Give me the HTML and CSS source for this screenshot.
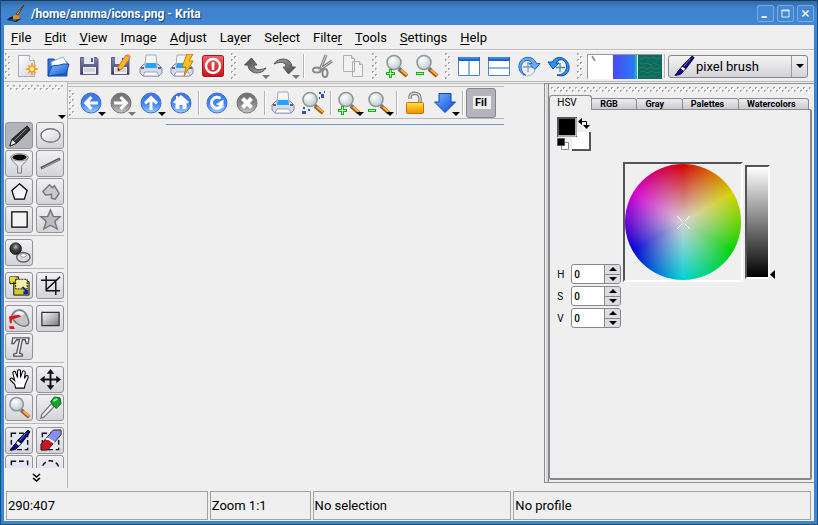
FILE: index.html
```html
<!DOCTYPE html>
<html lang="en">
<head>
<meta charset="utf-8">
<title>/home/annma/icons.png - Krita</title>
<link rel="stylesheet" href="styles.css">
</head>
<body>
<svg class="defs" aria-hidden="true">
  <defs>
    <linearGradient id="gBlue" x1="0" y1="0" x2="0" y2="1"><stop offset="0" stop-color="#3d74ea"/><stop offset=".55" stop-color="#3f83f8"/><stop offset="1" stop-color="#9fd0ff"/></linearGradient>
    <linearGradient id="gGray" x1="0" y1="0" x2="0" y2="1"><stop offset="0" stop-color="#6c6c6c"/><stop offset=".6" stop-color="#8c8c8c"/><stop offset="1" stop-color="#c8c8c8"/></linearGradient>
    <linearGradient id="gPaper" x1="0" y1="0" x2="1" y2="1"><stop offset="0" stop-color="#fff"/><stop offset="1" stop-color="#d0d3dc"/></linearGradient>
    <linearGradient id="gDisk" x1="0" y1="0" x2="0" y2="1"><stop offset="0" stop-color="#8388ae"/><stop offset="1" stop-color="#383c63"/></linearGradient>
    <linearGradient id="gFolder" x1="0" y1="0" x2="1" y2="1"><stop offset="0" stop-color="#8cc4ff"/><stop offset="1" stop-color="#0b50d0"/></linearGradient>
    <linearGradient id="gGold" x1="0" y1="0" x2="0" y2="1"><stop offset="0" stop-color="#ffe33c"/><stop offset="1" stop-color="#f58a00"/></linearGradient>
    <linearGradient id="gDark" x1="0" y1="0" x2="1" y2="1"><stop offset="0" stop-color="#444"/><stop offset="1" stop-color="#aaa"/></linearGradient>
    <linearGradient id="gRed" x1="0" y1="0" x2="0" y2="1"><stop offset="0" stop-color="#e66"/><stop offset="1" stop-color="#c8141b"/></linearGradient>
    <linearGradient id="gArrow" x1="0" y1="0" x2="1" y2="1"><stop offset="0" stop-color="#77b7ff"/><stop offset="1" stop-color="#0c45dd"/></linearGradient>
    <linearGradient id="gFade" x1="0" y1="0" x2="1" y2="1"><stop offset="0" stop-color="#fff"/><stop offset="1" stop-color="#777"/></linearGradient>
    <radialGradient id="gLens" cx=".38" cy=".32" r=".7"><stop offset="0" stop-color="#fff"/><stop offset="1" stop-color="#bccbd0"/></radialGradient>
    <radialGradient id="gBall" cx=".5" cy=".35" r=".6"><stop offset="0" stop-color="#bbb"/><stop offset=".5" stop-color="#444"/><stop offset="1" stop-color="#222"/></radialGradient>
    <pattern id="grip" width="6" height="6" patternUnits="userSpaceOnUse"><path d="M0 0h2v1h-1v1h-1zM3 3h2v1h-1v1h-1z" fill="#a4a4a4"/><path d="M2 1v1h-1v1h2v-2zM5 4v1h-1v1h2v-2z" fill="#fff"/></pattern>
  </defs>
  <symbol id="lens" viewBox="0 0 24 24"><path d="M14 15l8 7" stroke="#9a5a18" stroke-width="4"/><path d="M15 15l7 6" stroke="#ffae3d" stroke-width="2.2"/><path d="M13 13l3 3" stroke="#777" stroke-width="3"/><circle cx="9" cy="8.500" r="7" fill="url(#gLens)" stroke="#909798" stroke-width="1.600"/></symbol>
  <symbol id="new" viewBox="0 0 24 24"><path d="M3.500 1.500h11l5 5v16h-16z" fill="url(#gPaper)" stroke="#a5a9b4"/><path d="M14.500 1.500v5h5" fill="#fff" stroke="#b4b7be"/><path d="M17 9l1 4 3-2-2 3 4 1-4 1 2 3-3-2-1 4-1-4-3 2 2-3-4-1 4-1-2-3 3 2z" fill="#f7a11e" stroke="#f7a11e"/><circle cx="17" cy="15" r="2" fill="#fff3b0"/></symbol>
  <symbol id="open" viewBox="0 0 24 24"><path d="M2 22V5h6l2 3h11v14z" fill="#2b76e0" stroke="#0d48b0"/><path d="M5 8l12-5 5 8-15 6z" fill="#fff" stroke="#91a9d0"/><path d="M2 22l4-10 8-1 3-1h6l-3 10z" fill="url(#gFolder)" stroke="#0b45b4"/></symbol>
  <symbol id="save" viewBox="0 0 24 24"><path d="M3.500 3.500h16l1.500 2v15h-17.500z" fill="url(#gDisk)" stroke="#5b5f86"/><path d="M7 3h10v7H7z" fill="#e6e9f5"/><path d="M14 4h2v4h-2z" fill="#555a80"/><path d="M6 13h13v7H6z" fill="#eeeef2"/><path d="M7 15h11M7 17h11" stroke="#b7bac8"/></symbol>
  <symbol id="pencilo" viewBox="0 0 24 24"><path d="M18 1l4 3-8 11-4 2 0-4z" fill="#ffb62e" stroke="#c17a13"/><path d="M18 1l4 3 1-2-3-2z" fill="#ef8a86"/><path d="M10 17l0-3 2 2z" fill="#222"/></symbol>
  <symbol id="print" viewBox="0 0 24 24"><path d="M1 14l4-4h14l4 4v5l-3 3H4l-3-3z" fill="#d7dbe9" stroke="#858ba6"/><path d="M7 1h10l1 11H6z" fill="#f4f6fb" stroke="#a7abb8"/><path d="M7 9h10l1 5H6z" fill="#20a4ff"/><path d="M6 18h12l2 4H4z" fill="#fff" stroke="#9ba1b8"/><path d="M2 14h3M19 14h3" stroke="#5f6684" stroke-width="2"/></symbol>
  <symbol id="bolt" viewBox="0 0 24 24"><path d="M17 0h6l-4 7h4L14 22l2-9h-4z" fill="#ffc21c" stroke="#c8760a"/></symbol>
  <symbol id="power" viewBox="0 0 24 24"><rect x="1.500" y="1.500" width="21" height="21" rx="2" fill="url(#gRed)" stroke="#b01218"/><circle cx="12" cy="12" r="7" fill="none" stroke="#fff" stroke-width="2.400"/><path d="M12 8v8" stroke="#fff" stroke-width="2.600"/></symbol>
  <symbol id="undo" viewBox="0 0 24 24"><path d="M1.500 11l7-7 5.500 7h-3c0 5 5 6 12 3-4 7-17 7-18-3z" fill="url(#gDark)" stroke="#555"/></symbol>
  <symbol id="cut" viewBox="0 0 24 24"><path d="M15 1l-6 15M21 7L8 16" stroke="#777" stroke-width="3"/><path d="M15 1l-6 15M21 7L8 16" stroke="#ddd"/><ellipse cx="6" cy="16" rx="4" ry="2.500" fill="none" stroke="#888" stroke-width="2"/><ellipse cx="14" cy="19" rx="2.500" ry="4" fill="none" stroke="#888" stroke-width="2"/></symbol>
  <symbol id="copy" viewBox="0 0 24 24"><path d="M2.500 1.500h8l3 3v13h-11zM11.500 7.500h7l3 3v12h-10z" fill="#f1f1f1" stroke="#b0b0b0"/><path d="M18.500 7.500v3h3M10.500 1.500v3h3" fill="#ddd" stroke="#b0b0b0"/></symbol>
  <symbol id="plus" viewBox="0 0 24 24"><path d="M4 15h3v3h3v3H7v3H4v-3H1v-3h3z" fill="#14b414"/><path d="M5.500 16v7M2 19.500h7" stroke="#b9ffb0"/></symbol>
  <symbol id="minus" viewBox="0 0 24 24"><path d="M1 18h8v3H1z" fill="#14b414"/><path d="M2 19.500h6" stroke="#b9ffb0"/></symbol>
  <symbol id="splitv" viewBox="0 0 24 24"><path d="M1.500 3.500h21v18h-21z" fill="#fff" stroke="#4a86d8"/><path d="M1 3h22v4H1z" fill="#1e63d2"/><path d="M2 4h20" stroke="#6da5f5"/><path d="M12 7v14" stroke="#8fb3e6" stroke-width="2"/></symbol>
  <symbol id="splith" viewBox="0 0 24 24"><path d="M1.500 3.500h21v18h-21z" fill="#fff" stroke="#4a86d8"/><path d="M1 3h22v4H1z" fill="#1e63d2"/><path d="M2 4h20" stroke="#6da5f5"/><path d="M2 14h20" stroke="#8fb3e6" stroke-width="2"/></symbol>
  <symbol id="rot" viewBox="0 0 24 24"><path d="M18 15a8 8 0 0 1-8 7" fill="none" stroke="#99b7dc"/><path d="M11 8v10M6 13h10" stroke="#7f9cbd" stroke-width="1.300"/><path d="M9 21.500C0 20-1 6 9 3.500c5-1 9 2 10.500 6H23l-5 6-6-6h3c-1-2-3-3.500-6-3C2 9 3 18 9 21.500z" fill="#6aaaf5" stroke="#2467c8"/></symbol>
  <symbol id="rot2" viewBox="0 0 24 24"><path d="M13 9v9M9 13.500h9" stroke="#53869b" stroke-width="1.300"/><path d="M10 21c7 3 13-2 12-9S11-1 5 8H1l5 7 6-6H9c4-6 10-3 10.500 3S15 21 10 21z" fill="#2793ee" stroke="#0b4fac"/></symbol>
  <symbol id="ball" viewBox="0 0 24 24"><circle cx="12" cy="12" r="10" fill="url(#gBlue)" stroke="#456fca"/></symbol>
  <symbol id="ballg" viewBox="0 0 24 24"><circle cx="12" cy="12" r="10" fill="url(#gGray)" stroke="#777"/></symbol>
  <symbol id="larr" viewBox="0 0 24 24"><path d="M19 10.500h-8.500l3-3.500-2.200-2L4.500 12l6.800 7 2.200-2-3-3.500H19z" fill="#fff"/></symbol>
  <symbol id="home" viewBox="0 0 24 24"><path d="M12 4l8 7-1.500 1.500L17.500 12v6h-4v-4h-3v4h-4v-6l-1 .5L4 11l3-2.700V5h2v1.500z" fill="#fff"/></symbol>
  <symbol id="reload" viewBox="0 0 24 24"><path d="M15.500 7.500A5.500 5.500 0 1 0 16.500 15" fill="none" stroke="#fff" stroke-width="3"/><path d="M18.500 8.500v8.500l-7.500-4z" fill="#fff"/></symbol>
  <symbol id="cross" viewBox="0 0 24 24"><path d="M7.500 7.500l9 9M16.500 7.500l-9 9" stroke="#fff" stroke-width="4"/></symbol>
  <symbol id="bits" viewBox="0 0 24 24"><path d="M20 3h3v4h-3zM18 1h2v2h-2zM23 0h1v2h-1zM18 6h1v2h-1zM1 20h4v3H1zM7 18h2v2H7zM2 16h2v2H2z" fill="#3456a8"/></symbol>
  <symbol id="lock" viewBox="0 0 24 24"><path d="M7 8V6c0-5 10-5 10 1v4" fill="none" stroke="#777" stroke-width="3.500"/><path d="M7 8V6c0-5 10-5 10 1v4" fill="none" stroke="#ddd" stroke-width="1.400"/><rect x="3.500" y="11.500" width="17" height="11" rx="1" fill="url(#gGold)" stroke="#bb7409"/></symbol>
  <symbol id="down" viewBox="0 0 24 24"><path d="M6 2.500h12V11h4.500L12 21.500 1.500 11H6z" fill="url(#gArrow)" stroke="#1245b5"/></symbol>
  <symbol id="krita" viewBox="0 0 20 20"><path d="M1 16c4-5 9-4 14-1l-5 3z" fill="#14181c"/><path d="M7 12l5-2 2 5-7 1z" fill="#d98b29"/><path d="M18 1l-6 10-2-1z" fill="#e7a034" stroke="#63340a"/><path d="M2 16l6-1 3 2z" fill="#0a7da3"/></symbol>
  <symbol id="brush" viewBox="0 0 24 24"><path d="M21 1l2 2-9 12-4-3z" fill="#10108c" stroke="#000"/><path d="M19 4l-7 8" stroke="#6f78ff"/><path d="M10 12l4 3-3 3-3-3z" fill="#fff" stroke="#000"/><path d="M8 15l3 3c-2 4-6 4-9 4 3-2 3-5 6-7z" fill="#0808b0" stroke="#000"/></symbol>
  <symbol id="pen" viewBox="0 0 24 24"><path d="M20 2l3 4L9 20l-7 3 2-7z" fill="#333" stroke="#111"/><path d="M19 5L7 17" stroke="#999"/><path d="M4 16l5 4-7 3z" fill="#e8e8e8" stroke="#222"/></symbol>
  <symbol id="oval" viewBox="0 0 24 24"><ellipse cx="12" cy="12" rx="10" ry="7" fill="url(#gPaper)" stroke="#777" stroke-width="1.500"/></symbol>
  <symbol id="funnel" viewBox="0 0 24 24"><path d="M3 5c1 6 6 7 7 10v7h4v-7c1-3 6-4 7-10z" fill="url(#gPaper)" stroke="#777"/><ellipse cx="12" cy="5.500" rx="9" ry="3.800" fill="#ddd" stroke="#888"/><ellipse cx="12" cy="5.500" rx="7.500" ry="3" fill="#080808"/></symbol>
  <symbol id="line" viewBox="0 0 24 24"><path d="M2 17L22 7" stroke="#555" stroke-width="3"/><path d="M3 17L21 8" stroke="#aaa"/></symbol>
  <symbol id="penta" viewBox="0 0 24 24"><path d="M12 4l8 7-3 9H7l-3-9z" fill="#f6f6f6" stroke="#000" stroke-width="1.300"/></symbol>
  <symbol id="poly" viewBox="0 0 24 24"><path d="M4 12l7-7 3 3 2-2 5 8-4 6-4-1v-4l-6 1z" fill="#c9c9cc" stroke="#777" stroke-width="1.500"/></symbol>
  <symbol id="square" viewBox="0 0 24 24"><path d="M4 4h16v16H4z" fill="#f4f4f4" stroke="#000" stroke-width="1.300"/></symbol>
  <symbol id="star" viewBox="0 0 24 24"><path d="M12 2l3 7h7l-5.500 5 2.500 8-7-4-7 4 2.500-8L2 9h7z" fill="#bcbcbf" stroke="#777" stroke-width="1.500"/></symbol>
  <symbol id="dup" viewBox="0 0 24 24"><ellipse cx="16" cy="17" rx="7" ry="5" fill="#ddd" stroke="#666" stroke-width="1.500"/><ellipse cx="16" cy="15" rx="3" ry="2" fill="#fff" stroke="#888"/><circle cx="8" cy="8" r="6" fill="url(#gBall)" stroke="#222"/></symbol>
  <symbol id="trans" viewBox="0 0 24 24"><path d="M2 3h9v7H2zM6 8h16v14H6z" fill="#d0ca2c" stroke="#111"/><path d="M2 3h6v5H2z" fill="#e2dd3c"/><path d="M8 5.500h12v10H8z" fill="#f2f0a4" stroke="#111" stroke-dasharray="2 1"/><path d="M14 14l4 4h-2v3h5v-5l-1 1-4-4z" fill="#1522a5"/></symbol>
  <symbol id="crop" viewBox="0 0 24 24"><path d="M7.500 2v15.500H22M2 6.500h15.500V22M7 17L22 3" fill="none" stroke="#111" stroke-width="1.500"/></symbol>
  <symbol id="fill" viewBox="0 0 24 24"><path d="M4 9c3-8 13-8 16 1 3 7 2 10-3 10-6 0-12-5-13-11z" fill="#c4c4c4" stroke="#777" stroke-width="1.500"/><path d="M7 7c3-4 8-3 10 0-3 3-7 3-10 0z" fill="#f5f5f5"/><path d="M1 10l10-2 3 2-10 3v4H2zM1 20h5l1 3H2z" fill="#e0151c"/></symbol>
  <symbol id="grad" viewBox="0 0 24 24"><path d="M3 5.500h18v14H3z" fill="url(#gFade)" stroke="#333" stroke-width="1.300"/></symbol>
  <symbol id="text" viewBox="0 0 24 24"><path d="M5 3h17l-1 6h-2l-1-4h-3l-3 14 3 1v2H6v-2l3-1 3-14H9L6 9H4z" fill="#f8f8f8" stroke="#555" stroke-width="1.400"/></symbol>
  <symbol id="hand" viewBox="0 0 24 24"><path d="M8 21l-1-4-5-5c1-3 3-1 5 1L5 5c1-3 3-1 3 0l2 5V3c1-2 3-1 3 0v7l2-6c1-2 3-1 3 1l-1 6 2-3c2-1 2 1 2 2l-3 7-1 4z" fill="#fff" stroke="#000" stroke-width="1.100"/></symbol>
  <symbol id="move" viewBox="0 0 24 24"><path d="M12 1l4 5h-3v5h5V8l5 4-5 4v-3h-5v5h3l-4 5-4-5h3v-5H6v3l-5-4 5-4v3h5V6H8z" fill="#111"/></symbol>
  <symbol id="drop" viewBox="0 0 24 24"><path d="M13 8l3 3L5 22l-3 1 1-4z" fill="#eee" stroke="#777" stroke-width="1.300"/><path d="M12 6l4-5 6 1 1 6-5 5z" fill="#16a52b" stroke="#096214"/><path d="M15 5l4-2" stroke="#92f59c" stroke-width="2"/></symbol>
  <symbol id="selrect" viewBox="0 0 24 24"><path d="M3.500 4.500h17v17h-17z" fill="#e3e6f4" stroke="#111" stroke-width="1.500" stroke-dasharray="5 3"/></symbol>
  <symbol id="seloval" viewBox="0 0 24 24"><circle cx="12" cy="13" r="9" fill="#e3e6f4" stroke="#111" stroke-width="1.500" stroke-dasharray="5 3"/></symbol>
  <symbol id="eraser" viewBox="0 0 24 24"><path d="M2 16L15 1h8v5L9 22H2z" fill="#c81420" stroke="#222"/><path d="M8 9.500l7-8h7.500v4.500l-7 8z" fill="#8390f2"/><path d="M7 10.500h3l6 4" fill="none" stroke="#fff" stroke-width="2"/></symbol>
</svg>

<div class="window">
  <header class="titlebar">
    <svg class="app-icon"><use href="#krita"/></svg>
    <h1>/home/annma/icons.png - Krita</h1>
    <button class="winbtn" aria-label="Minimize"><svg viewBox="0 0 17 17"><path d="M4 12.500h6" stroke="#fff" stroke-width="2"/></svg></button>
    <button class="winbtn" aria-label="Maximize"><svg viewBox="0 0 17 17"><path d="M4.500 4.500h8v8h-8zM4 5.500h9" fill="none" stroke="#fff"/></svg></button>
    <button class="winbtn" aria-label="Close"><svg viewBox="0 0 17 17"><path d="M5 5l7 7M12 5l-7 7" stroke="#fff" stroke-width="1.600"/></svg></button>
  </header>

  <nav class="menubar">
    <button><u>F</u>ile</button><button><u>E</u>dit</button><button><u>V</u>iew</button><button><u>I</u>mage</button><button><u>A</u>djust</button><button>La<u>y</u>er</button><button>Se<u>l</u>ect</button><button>Filte<u>r</u></button><button><u>T</u>ools</button><button><u>S</u>ettings</button><button><u>H</u>elp</button>
  </nav>

  <div class="toolbar main-tools">
    <svg class="grip first"><rect width="100%" height="100%" fill="url(#grip)"/></svg>
    <div class="group spaced">
      <button class="tb" aria-label="New"><svg><use href="#new"/></svg></button>
      <button class="tb" aria-label="Open"><svg><use href="#open"/></svg></button>
      <button class="tb" aria-label="Save"><svg><use href="#save"/></svg></button>
      <button class="tb" aria-label="Save as"><svg><use href="#save"/><use href="#pencilo"/></svg></button>
      <button class="tb" aria-label="Print"><svg><use href="#print"/></svg></button>
      <button class="tb" aria-label="Quick print"><svg><use href="#print"/><use href="#bolt"/></svg></button>
      <button class="tb" aria-label="Quit"><svg><use href="#power"/></svg></button>
    </div>
    <svg class="grip"><rect width="100%" height="100%" fill="url(#grip)"/></svg>
    <button class="tb menu dim" aria-label="Undo"><svg><use href="#undo"/></svg></button>
    <button class="tb menu dim" aria-label="Redo"><svg class="turned"><use href="#undo"/></svg></button>
    <span class="sep"></span>
    <button class="tb" aria-label="Cut"><svg><use href="#cut"/></svg></button>
    <button class="tb" aria-label="Copy"><svg><use href="#copy"/></svg></button>
    <svg class="grip wide"><rect width="100%" height="100%" fill="url(#grip)"/></svg>
    <button class="tb" aria-label="Zoom in"><svg><use href="#lens"/><use href="#plus"/></svg></button>
    <button class="tb" aria-label="Zoom out"><svg><use href="#lens"/><use href="#minus"/></svg></button>
    <svg class="grip"><rect width="100%" height="100%" fill="url(#grip)"/></svg>
    <button class="tb" aria-label="Split view left and right"><svg><use href="#splitv"/></svg></button>
    <button class="tb" aria-label="Split view top and bottom"><svg><use href="#splith"/></svg></button>
    <button class="tb" aria-label="Rotate right"><svg><use href="#rot"/></svg></button>
    <button class="tb" aria-label="Rotate left"><svg><use href="#rot2"/></svg></button>
    <svg class="grip"><rect width="100%" height="100%" fill="url(#grip)"/></svg>
    <div class="resources">
      <button class="res brush-res" aria-label="Brush shape"><svg viewBox="0 0 24 24"><path d="M4 1l3 5" stroke="#888" stroke-width="1.500"/></svg></button>
      <button class="res gradient-res" aria-label="Gradient"></button>
      <button class="res pattern-res" aria-label="Pattern"><svg viewBox="0 0 24 24"><path d="M1 3l3 1 3-2 4 2 4-2 3 2 4-1M2 8l4 1 3-1 4 2 3-2 5 2M1 13l4-1 4 2 4-2 4 2 5-1M2 17l4-1 3 2 5-2 3 2 5-1M1 22l4-1 4 1 5-2 4 2" fill="none" stroke="#1a8270"/></svg></button>
    </div>
    <span class="sep"></span>
    <label class="paintop"><svg><use href="#brush"/></svg>
      <select aria-label="Paint operation"><option>pixel brush</option></select><span class="drop-arrow"></span></label>
  </div>

  <div class="workspace">
    <aside class="toolbox">
      <svg class="hgrip"><rect width="100%" height="100%" fill="url(#grip)"/></svg>
      <span class="caret"></span>
      <div class="tools">
        <div class="toolset">
          <button class="tool on" aria-label="Freehand"><svg><use href="#pen"/></svg></button>
          <button class="tool" aria-label="Ellipse"><svg><use href="#oval"/></svg></button>
          <button class="tool" aria-label="Filter brush"><svg><use href="#funnel"/></svg></button>
          <button class="tool" aria-label="Line"><svg><use href="#line"/></svg></button>
          <button class="tool" aria-label="Polygon"><svg><use href="#penta"/></svg></button>
          <button class="tool" aria-label="Polyline"><svg><use href="#poly"/></svg></button>
          <button class="tool" aria-label="Rectangle"><svg><use href="#square"/></svg></button>
          <button class="tool" aria-label="Star"><svg><use href="#star"/></svg></button>
        </div>
        <div class="toolset"><button class="tool" aria-label="Duplicate"><svg><use href="#dup"/></svg></button></div>
        <div class="toolset">
          <button class="tool" aria-label="Transform"><svg><use href="#trans"/></svg></button>
          <button class="tool" aria-label="Crop"><svg><use href="#crop"/></svg></button>
        </div>
        <div class="toolset">
          <button class="tool" aria-label="Fill"><svg><use href="#fill"/></svg></button>
          <button class="tool" aria-label="Gradient tool"><svg><use href="#grad"/></svg></button>
          <button class="tool" aria-label="Text"><svg><use href="#text"/></svg></button>
        </div>
        <div class="toolset">
          <button class="tool" aria-label="Pan"><svg><use href="#hand"/></svg></button>
          <button class="tool" aria-label="Move"><svg><use href="#move"/></svg></button>
          <button class="tool" aria-label="Zoom"><svg><use href="#lens"/></svg></button>
          <button class="tool" aria-label="Color picker"><svg><use href="#drop"/></svg></button>
        </div>
        <div class="toolset">
          <button class="tool" aria-label="Selection brush"><svg><use href="#selrect"/><use href="#brush"/></svg></button>
          <button class="tool" aria-label="Selection eraser"><svg><use href="#selrect"/><use href="#eraser"/></svg></button>
          <button class="tool" aria-label="Rectangular selection"><svg><use href="#selrect"/></svg></button>
          <button class="tool" aria-label="Elliptical selection"><svg><use href="#seloval"/></svg></button>
        </div>
      </div>
      <button class="more" aria-label="More tools"><svg viewBox="0 0 9 10"><path d="M1 1l3.500 3L8 1M1 5l3.500 3L8 5" fill="none" stroke="#000" stroke-width="1.600"/></svg></button>
    </aside>

    <main class="canvas">
      <div class="toolbar nav-tools">
        <svg class="grip first"><rect width="100%" height="100%" fill="url(#grip)"/></svg>
        <button class="tb menu" aria-label="Back"><svg><use href="#ball"/><use href="#larr"/></svg></button>
        <button class="tb menu dim" aria-label="Forward"><svg class="flip"><use href="#ballg"/><use href="#larr"/></svg></button>
        <button class="tb menu" aria-label="Up"><svg><use href="#ball"/><use class="up" href="#larr"/></svg></button>
        <button class="tb" aria-label="Home"><svg><use href="#ball"/><use href="#home"/></svg></button>
        <span class="sep"></span>
        <button class="tb" aria-label="Reload"><svg><use href="#ball"/><use href="#reload"/></svg></button>
        <button class="tb" aria-label="Stop"><svg><use href="#ballg"/><use href="#cross"/></svg></button>
        <span class="sep"></span>
        <button class="tb" aria-label="Print image"><svg><use href="#print"/></svg></button>
        <button class="tb" aria-label="Find"><svg><use href="#lens"/><use href="#bits"/></svg></button>
        <span class="sep"></span>
        <button class="tb menu" aria-label="Enlarge"><svg><use href="#lens"/><use href="#plus"/></svg></button>
        <button class="tb menu" aria-label="Shrink"><svg><use href="#lens"/><use href="#minus"/></svg></button>
        <span class="sep"></span>
        <button class="tb" aria-label="Unlock"><svg><use href="#lock"/></svg></button>
        <button class="tb menu" aria-label="Download"><svg><use href="#down"/></svg></button>
        <span class="sep"></span>
        <button class="filter-toggle"><span>Fil</span></button>
      </div>
      <div class="rule"></div>
    </main>

    <section class="dock">
      <svg class="hgrip"><rect width="100%" height="100%" fill="url(#grip)"/></svg>
      <div class="tabs" role="tablist">
        <button class="tab active">HSV</button><button class="tab t1">RGB</button><button class="tab t2">Gray</button><button class="tab t3">Palettes</button><button class="tab t4">Watercolors</button>
      </div>
      <div class="panel">
        <div class="left">
          <svg class="fgbg" viewBox="0 0 36 36"><path d="M15 15h19v19H15z" fill="#fff"/><path d="M15 33h18V15" fill="none" stroke="#555" stroke-width="2"/><path d="M0 0h20v20H0z" fill="#555"/><path d="M2 2h16v16H2z"/><path d="M19 1v18H1" fill="none" stroke="#fff"/><path d="M4.500 25.500h7v7h-7z" fill="#fff" stroke="#888"/><path d="M.5 21.500h7v7h-7z" stroke="#555"/><path d="M25 1v7l-4-3.500zM26 8h7l-3.500 4z"/><path d="M24 4.500h5.500V9" fill="none" stroke="#000"/></svg>
          <div class="spins">
            <label for="h">H</label><span class="spin"><input id="h" value="0"><span><button aria-label="Increase H"></button><button aria-label="Decrease H"></button></span></span>
            <label for="s">S</label><span class="spin"><input id="s" value="0"><span><button aria-label="Increase S"></button><button aria-label="Decrease S"></button></span></span>
            <label for="v">V</label><span class="spin"><input id="v" value="0"><span><button aria-label="Increase V"></button><button aria-label="Decrease V"></button></span></span>
          </div>
        </div>
        <div class="wheel-box"><div class="wheel"><svg viewBox="0 0 15 15"><path d="M1 1l5 5M9 9l5 5M14 1L9 6M6 9l-5 5" stroke="#fff"/></svg></div></div>
        <div class="value"><div class="value-bar"></div><svg viewBox="0 0 6 9"><path d="M5 0v9L0 4.500z"/></svg></div>
      </div>
    </section>
  </div>

  <footer class="statusbar"><span>290:407</span><span>Zoom 1:1</span><span>No selection</span><span>No profile</span></footer>
</div>
</body>
</html>
```
FILE: styles.css
```css
* { box-sizing: border-box; }
body { margin: 0; font: 13px Roboto, "Liberation Sans", sans-serif; color: #000; }
button, input, select { font: inherit; color: inherit; margin: 0; padding: 0; border: 0; background: none; }
svg { display: block; flex: none; }
.defs { position: absolute; width: 0; height: 0; }

.window {
  display: flex;
  flex-direction: column;
  height: 100vh;
  padding: 0 3px 3px;
  background: #3c84d0;
  border: solid #1d4d80;
  border-width: 0 1px 1px;
}

.titlebar {
  display: flex;
  align-items: center;
  height: 25px;
  gap: 3px;
  padding: 1px 3px 0;
  margin: 0 -3px;
  border-top: 1px solid #173c66;
  background: linear-gradient(#3269a5, #3e82cb 30%, #4287d2);
  flex: none;
}
.app-icon { width: 20px; height: 20px; margin-left: 2px; }
.titlebar h1 { flex: 1; margin: 0 2px; font-size: 12px; line-height: 16px; color: #fff; text-shadow: 1px 1px 1px #123c6c; }
.winbtn { width: 17px; height: 17px; background: #4388d2; border: 1px solid #77ace5; border-radius: 2px; }

.menubar {
  display: flex;
  height: 25px;
  background: #efefef;
  border-bottom: 1px solid #b9b9b9;
  flex: none;
}
.menubar button { padding: 0 6px 0 7px; }
.menubar u { text-underline-offset: 2px; }

.toolbar { display: flex; align-items: center; height: 32px; background: #efefef; flex: none; }
.main-tools { border-bottom: 1px solid #b9b9b9; border-top: 1px solid #fff; }
.group { display: flex; }
.spaced { gap: 1px; }
.tb { display: grid; place-items: center; width: 30px; height: 28px; position: relative; flex: none; }
.tb > svg { width: 24px; height: 24px; }
.flip { transform: scaleX(-1); }
.turned { transform: rotate(180deg); }
.up { transform: rotate(90deg); transform-origin: 12px 12px; }
.menu::after {
  content: "";
  position: absolute;
  right: 0;
  bottom: 1px;
  border: 4px solid transparent;
  border-top-color: #000;
  border-bottom: 0;
}
.menu.dim::after { border-top-color: #777; }
.grip { width: 6px; height: 26px; margin: 0 3px; }
.grip.first { margin: 0 1px; }
.grip.wide { margin: 0 4px; }
.sep { width: 2px; height: 24px; margin: 0 2px; border-left: 1px solid #b4b4b4; border-right: 1px solid #fff; flex: none; }
.main-tools .menu + .sep { margin: 0 3px; }
.resources { display: flex; gap: 1px; margin-left: 1px; border: 1px solid #999; border-width: 1px 0 0 1px; flex: none; }
.res { width: 24px; height: 24px; }
.brush-res { background: #fff; }
.gradient-res { background: linear-gradient(90deg, #4a4af5, #2b76f5 85%, #18c8a8); }
.pattern-res { background: #126a5c; }

.paintop {
  display: flex;
  align-items: center;
  flex: 1;
  height: 23px;
  margin-right: 6px;
  padding-left: 4px;
  border: 1px solid #85858b;
  border-radius: 3px;
  background: linear-gradient(#f4f4f6, #d2d2d9);
}
.paintop svg { width: 22px; height: 22px; }
.paintop select { flex: 1; min-width: 0; padding-left: 1px; appearance: none; }
.drop-arrow { display: grid; place-items: center; width: 16px; height: 100%; border-left: 1px solid #9a9aa0; }
.drop-arrow::after, .caret { content: ""; border: 4px solid transparent; border-top-color: #000; border-bottom: 0; }

.workspace { display: flex; flex: 1; min-height: 0; background: #efefef; }

.toolbox {
  display: flex;
  flex-direction: column;
  width: 64px;
  border-right: 1px solid #b9b9b9;
  padding: 3px 0 0 1px;
  flex: none;
}
.hgrip { width: calc(100% - 6px); height: 6px; margin-left: 2px; }
.caret { align-self: flex-end; margin: 24px 1px 3px; }
.tools { flex: 1; min-height: 0; overflow: hidden; margin-right: 3px; }
.toolset { display: grid; grid-template-columns: 28px 28px; gap: 1px 3px; padding-bottom: 2px; margin-bottom: 3px; border-bottom: 1px solid #b9b9b9; }
.tool {
  display: grid;
  place-items: center;
  width: 28px;
  height: 27px;
  border: 1px solid #939399;
  border-radius: 3px;
  background: linear-gradient(#f1f1f4, #d3d3da);
}
.tool svg { width: 23px; height: 23px; }
.tool.on { background: #b4b5bb; }
.more { display: grid; place-items: center; height: 20px; }
.more svg { width: 9px; height: 10px; }

.canvas { flex: 1; min-width: 0; padding-top: 2px; border-top: 1px solid #b9b9b9; margin-top: 1px; }
.nav-tools { height: 33px; margin-right: 40px; border-top: 1px solid #b9b9b9; border-bottom: 1px solid #b9b9b9; }
.filter-toggle { width: 30px; height: 30px; border: 1px solid #85858b; border-radius: 3px; background: #b4b5bb; }
.filter-toggle span { display: block; margin: 0 4px 0 6px; padding-left: 2px; background: #efefef; font-weight: 700; font-size: 11px; text-align: left; }
.rule { height: 1px; margin: 5px 40px 0 98px; background: #6f99bd; }

.dock {
  display: flex;
  flex-direction: column;
  width: 33.300%;
  margin: 1px 0 5px;
  padding: 3px 1px 0 0;
  border: solid #8e8e92;
  border-width: 1px 0 1px 1px;
  flex: none;
  position: relative;
}
.dock .hgrip { margin-left: 6px; width: calc(100% - 8px); flex: none; }
.dock::before { content: ""; position: absolute; inset: 0 auto 0 1px; width: 2px; background: #d6d6dc; border-right: 1px solid #88888c; }
.tabs { display: flex; align-items: flex-end; height: 15px; margin: 2px 4px 0; position: relative; flex: none; z-index: 1; }
.tab {
  height: 12px;
  padding-left: 8px;
  border: 1px solid #8b8b90;
  border-left: 0;
  border-radius: 0 3px 0 0;
  background: linear-gradient(#ededf1, #c9c9d1);
  font: 700 9px/10px Roboto, sans-serif;
  text-align: left;
}
.tab.active { flex: 41 1 0; height: 15px; padding-left: 7px; border: 1px solid #8b8b90; border-bottom: 0; border-radius: 3px 3px 0 0; background: #efefef; font-size: 10px; font-weight: 400; line-height: 12px; }
.t1 { flex: 44 1 0; }
.t2 { flex: 44 1 0; }
.t3 { flex: 57 1 0; }
.t4 { flex: 74 1 0; }
.panel {
  display: flex;
  flex: 1;
  align-items: flex-start;
  margin: -1px 1px 2px 4px;
  padding: 7px 0 0 7px;
  border: 1px solid #88888c;
  border-right-width: 2px;
  border-bottom-width: 2px;
  border-radius: 2px;
}
.left { display: flex; flex-direction: column; gap: 111px; width: 66px; flex: none; }
.fgbg { width: 36px; height: 36px; }
.spins { display: grid; grid-template-columns: 14px 50px; gap: 2px 0; align-items: center; font-size: 10px; }
.spin { display: flex; height: 20px; border: 1px solid #88888c; border-radius: 3px; background: #fff; overflow: hidden; }
.spin input { width: 32px; padding-left: 2px; font-size: 10px; font-weight: 500; }
.spin > span { display: grid; grid-template-rows: 1fr 1fr; flex: 1; border-left: 1px solid #88888c; gap: 1px; background: #88888c; }
.spin button { display: grid; place-items: center; background: #dcdce2; }
.spin button::after { content: ""; border: 4px solid transparent; border-top: 0; border-bottom-color: #000; }
.spin button:last-child::after { border-top: 4px solid #000; border-bottom: 0; }
.wheel-box { margin-top: 45px; border: 2px solid; border-color: #555 #fff #fff #555; flex: none; }
.wheel {
  display: grid;
  place-items: center;
  width: 116px;
  height: 116px;
  border-radius: 50%;
  background:
    radial-gradient(closest-side, #d4d4d4, #d4d4d400),
    conic-gradient(#d40000, #d4d400 60deg, #00d400 120deg, #00d4d4 180deg, #0000d4 240deg, #d400d4 300deg, #d40000);
}
.wheel svg { width: 15px; height: 15px; }
.value { display: flex; align-items: flex-end; margin: 48px 0 0 2px; }
.value-bar { width: 25px; height: 114px; border: 2px solid; border-color: #555 #fff #fff #555; background: linear-gradient(#fff, #000); }
.value svg { width: 6px; height: 9px; }

.statusbar {
  display: grid;
  grid-template-columns: 202fr 101fr 199fr 298fr;
  gap: 2px;
  padding: 3px 3px 1px 2px;
  background: #efefef;
  flex: none;
}
.statusbar span { height: 29px; border: 1px solid #a2a2a2; line-height: 27px; padding-left: 1px; }
```
